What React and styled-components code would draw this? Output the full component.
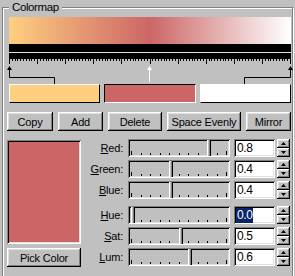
import React from "react";
import styled, { createGlobalStyle } from "styled-components";

const GlobalStyle = createGlobalStyle`
  body {
    margin: 0;
    background: #c0c0c0;
    font-family: "Liberation Sans", Arial, sans-serif;
    font-size: 11px;
    letter-spacing: -0.2px;
    color: #000;
  }
`;

const raised = `
  box-shadow: inset -1px -1px 0 #000, inset 1px 1px 0 #fff,
    inset -2px -2px 0 #808080, inset 2px 2px 0 #dfdfdf;
`;

const sunken = `
  box-shadow: inset 1px 1px 0 #808080, inset -1px -1px 0 #fff,
    inset 2px 2px 0 #000, inset -2px -2px 0 #dfdfdf;
`;

const Group = styled.fieldset`
  margin: 0 0 0 2px;
  width: 291px;
  min-height: 285px;
  box-sizing: border-box;
  padding: 3px 1px 0 4px;
  border: 1px solid #808080;
  box-shadow: inset 1px 1px 0 #fff, 1px 1px 0 #fff;
`;

const Legend = styled.legend`
  margin-left: 2px;
  padding: 0 3px;
  line-height: 14px;
  font-size: 11.5px;
  letter-spacing: -0.4px;
  background: #c0c0c0;
`;

const MapArea = styled.div`
  margin-left: 2px;
  width: 282px;
`;

const Gradient = styled.div`
  height: 27px;
  background: linear-gradient(to right, #ffcf80 0%, #cc6666 50%, #ffffff 100%);
`;

const Drawing = styled.svg`
  display: block;
  overflow: visible;
`;

const SwatchRow = styled.div`
  display: grid;
  grid-template-columns: repeat(3, 1fr);
  gap: 4px;
`;

const Swatch = styled.div`
  height: 19px;
  box-sizing: border-box;
  background: ${(p) => p.$color};
  border-style: solid;
  border-width: 1px;
  border-color: ${(p) =>
    p.$selected ? "#000 #fff #fff #000" : "#fff #000 #000 #fff"};
`;

const ButtonRow = styled.div`
  display: flex;
  gap: 5px;
  margin-top: 9px;
`;

const Button = styled.button`
  width: ${(p) => p.$w}px;
  height: 19px;
  padding: 0;
  border: none;
  background: #c0c0c0;
  font: inherit;
  letter-spacing: inherit;
  color: #000;
  ${raised}
`;

const Lower = styled.div`
  display: flex;
  margin-top: 8px;
`;

const LeftCol = styled.div`
  width: 74px;
  display: flex;
  flex-direction: column;
`;

const Preview = styled.div`
  margin-top: 1px;
  height: 104px;
  background: ${(p) => p.$color};
  ${sunken}
`;

const PickButton = styled(Button)`
  margin-top: 4px;
`;

const Controls = styled.div`
  display: flex;
  flex-direction: column;
`;

const Row = styled.div`
  display: flex;
  height: 18px;
  margin-top: ${(p) => (p.$first ? 0 : p.$groupStart ? 7 : 3)}px;
`;

const Label = styled.label`
  width: 47px;
  box-sizing: border-box;
  padding-right: 5px;
  text-align: right;
  line-height: 18px;
`;

const Track = styled.div`
  position: relative;
  width: 102px;
  height: 18px;
  ${sunken}
`;

const Thumb = styled.div`
  position: absolute;
  top: 1px;
  width: 4px;
  height: 16px;
  box-sizing: border-box;
  background: #c0c0c0;
  border-left: 1px solid #fff;
  border-right: 1px solid #000;
  box-shadow: inset -1px 0 0 #808080;
`;

const TextBox = styled.div`
  width: 41px;
  margin-left: 4px;
  box-sizing: border-box;
  padding-left: 3px;
  background: #fff;
  font-size: 12px;
  letter-spacing: -0.4px;
  line-height: 18px;
  ${sunken}
`;

const Selected = styled.span`
  display: inline-block;
  margin-left: -1px;
  padding: 0 1px;
  line-height: 15px;
  background: #0a246a;
  color: #fff;
`;

const Spin = styled.div`
  display: flex;
  flex-direction: column;
  width: 13px;
  margin-left: 2px;
`;

const SpinButton = styled.div`
  height: 9px;
  display: flex;
  align-items: center;
  justify-content: center;
  background: #c0c0c0;
  ${raised}
`;

const Ruler = () => {
  const ticks = [];
  for (let i = 0; i <= 100; i++) {
    const x = Math.round(i * 2.81) + 0.5;
    const len = i % 10 === 0 ? 5 : 2;
    ticks.push(<line key={i} x1={x} x2={x} y1={15} y2={15 + len} stroke="#000" />);
  }
  return (
    <Drawing width="282" height="20">
      <rect x="0" y="0" width="282" height="8" fill="#000" />
      <rect x="0" y="8" width="282" height="1" fill="#e0e0e0" />
      <rect x="0" y="9" width="282" height="6" fill="#000" />
      {ticks}
    </Drawing>
  );
};

const Arrow = ({ x, color }) => (
  <path d={`M${x} 2 L${x + 2.5} 6 L${x - 2.5} 6 Z`} fill={color} />
);

const Markers = () => (
  <Drawing width="282" height="20">
    <Arrow x={0.5} color="#000" />
    <polyline points="0.5,6 0.5,13.5 45.5,13.5 45.5,20" fill="none" stroke="#000" />
    <Arrow x={140.5} color="#fff" />
    <line x1="140.5" x2="140.5" y1="6" y2="18" stroke="#fff" />
    <Arrow x={281.5} color="#000" />
    <polyline points="281.5,6 281.5,13.5 235.5,13.5 235.5,20" fill="none" stroke="#000" />
  </Drawing>
);

const Ticks = () => {
  const marks = [];
  for (let i = 0; i <= 10; i++) {
    const x = Math.round(3 + i * 9.5) + 0.5;
    const end = i === 0 || i === 10;
    marks.push(<line key={i} x1={x} x2={x} y1={end ? 12 : 14} y2={16} stroke="#000" />);
  }
  return (
    <Drawing width="102" height="18">
      {marks}
    </Drawing>
  );
};

const UpIcon = () => (
  <svg width="5" height="3">
    <path d="M2.5 0 L5 3 L0 3 Z" fill="#000" />
  </svg>
);

const DownIcon = () => (
  <svg width="5" height="3">
    <path d="M0 0 L5 0 L2.5 3 Z" fill="#000" />
  </svg>
);

const channels = [
  { key: "R", rest: "ed:", value: 0.8 },
  { key: "G", rest: "reen:", value: 0.4 },
  { key: "B", rest: "lue:", value: 0.4 },
  { key: "H", rest: "ue:", value: 0.0, groupStart: true, selected: true },
  { key: "S", rest: "at:", value: 0.5 },
  { key: "L", rest: "um:", value: 0.6 },
];

const buttons = [
  { text: "Copy", w: 46 },
  { text: "Add", w: 45 },
  { text: "Delete", w: 54 },
  { text: "Space Evenly", w: 74 },
  { text: "Mirror", w: 45 },
];

const App = () => {
  return (
    <>
      <GlobalStyle />
      <Group>
        <Legend>Colormap</Legend>
        <MapArea>
          <Gradient />
          <Ruler />
          <Markers />
          <SwatchRow>
            <Swatch $color="#ffcf80" />
            <Swatch $color="#cc6666" $selected />
            <Swatch $color="#ffffff" />
          </SwatchRow>
        </MapArea>
        <ButtonRow>
          {buttons.map((b) => (
            <Button key={b.text} $w={b.w}>
              {b.text}
            </Button>
          ))}
        </ButtonRow>
        <Lower>
          <LeftCol>
            <Preview $color="#cc6666" />
            <PickButton $w={74}>Pick Color</PickButton>
          </LeftCol>
          <Controls>
            {channels.map((c, i) => (
              <Row key={c.key} $first={i === 0} $groupStart={c.groupStart}>
                <Label>
                  <u>{c.key}</u>
                  {c.rest}
                </Label>
                <Track>
                  <Ticks />
                  <Thumb style={{ left: 3 + 95 * c.value }} />
                </Track>
                <TextBox>
                  {c.selected ? <Selected>{c.value.toFixed(1)}</Selected> : c.value.toFixed(1)}
                </TextBox>
                <Spin>
                  <SpinButton>
                    <UpIcon />
                  </SpinButton>
                  <SpinButton>
                    <DownIcon />
                  </SpinButton>
                </Spin>
              </Row>
            ))}
          </Controls>
        </Lower>
      </Group>
    </>
  );
};

export default App;
